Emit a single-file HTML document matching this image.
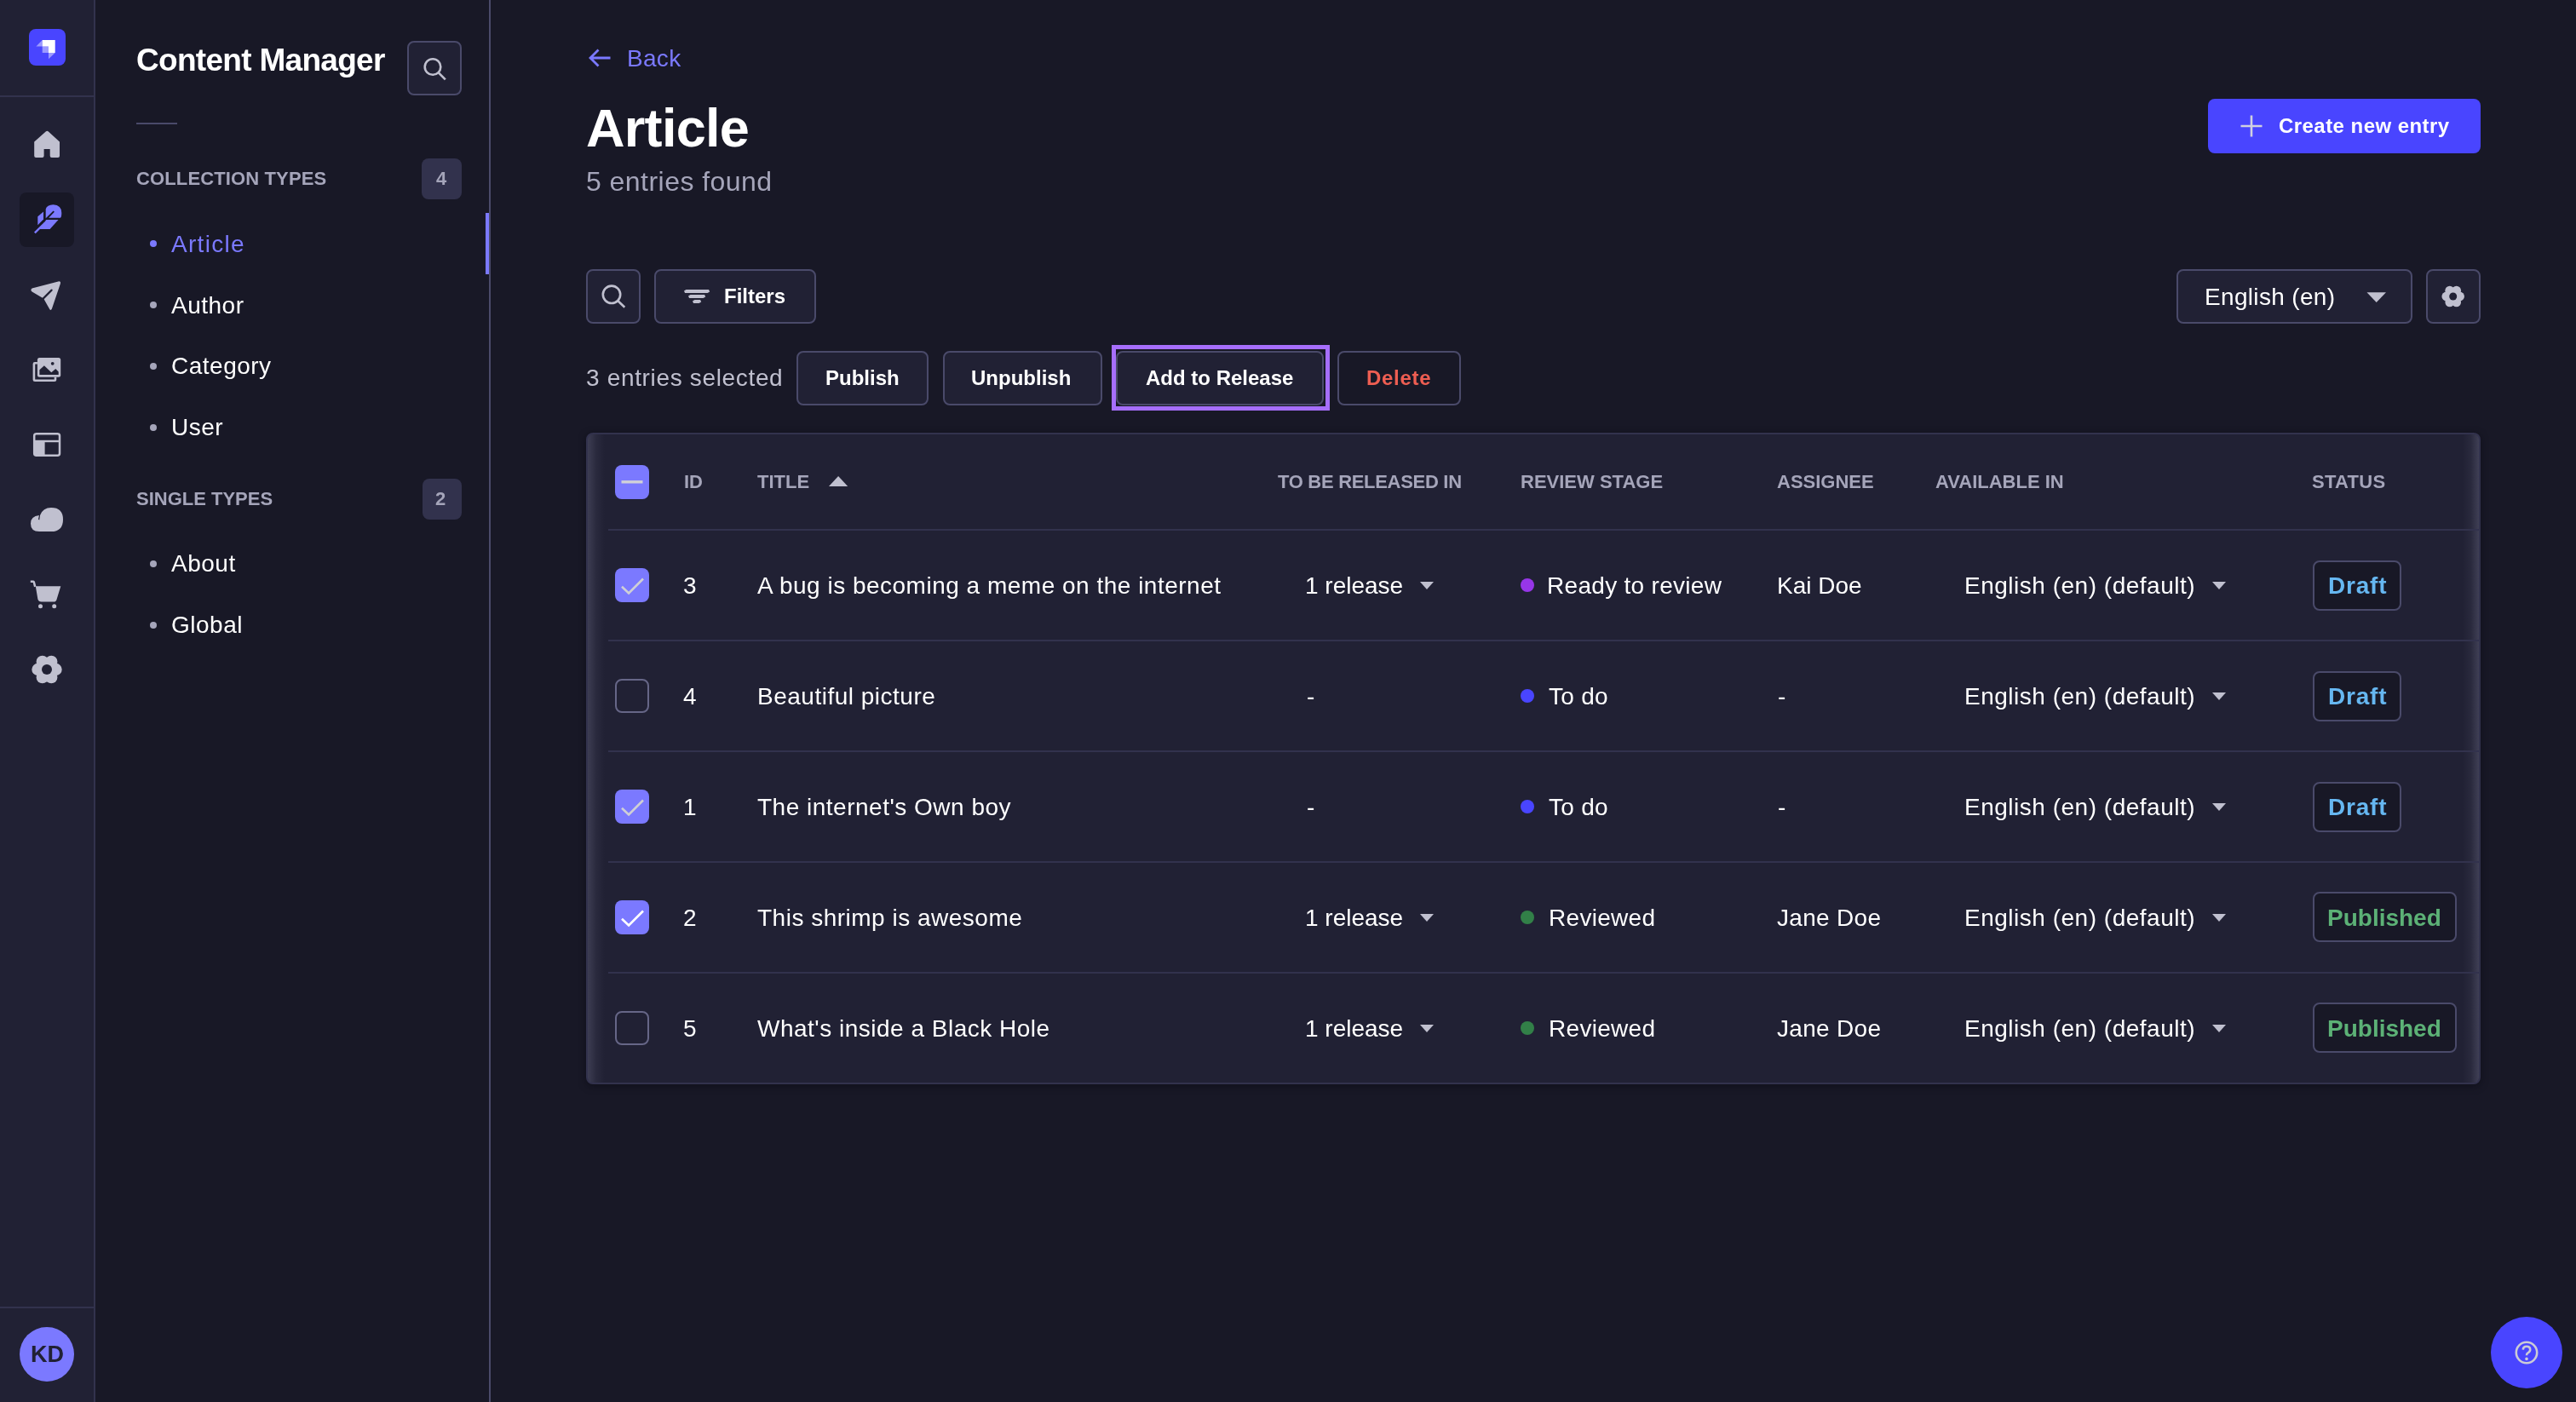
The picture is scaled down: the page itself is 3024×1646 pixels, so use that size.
<!DOCTYPE html>
<html><head><meta charset="utf-8">
<style>
html,body{margin:0;padding:0;}
body{width:3024px;height:1646px;overflow:hidden;background:#181826;position:relative;font-family:"Liberation Sans",sans-serif;}
.a{position:absolute;box-sizing:border-box;}
.t{position:absolute;white-space:nowrap;line-height:1;font-family:"Liberation Sans",sans-serif;will-change:transform;}
.btn{position:absolute;box-sizing:border-box;background:#212134;border:2px solid #4a4a6a;border-radius:8px;}
.hl{position:absolute;left:714px;width:2196px;height:2px;background:#32324d;}
.th{font-size:22px;font-weight:700;color:#a5a5ba;}
.td{font-size:28px;color:#ffffff;}
.cb{position:absolute;left:722px;width:40px;height:40px;border-radius:8px;box-sizing:border-box;}
.cbon{background:#7b79ff;}
.cboff{border:2px solid #666687;}
.dot{position:absolute;width:16px;height:16px;border-radius:50%;left:1785px;}
.badge{position:absolute;left:2715px;height:59px;box-sizing:border-box;background:#181826;border:2px solid #4a4a6a;border-radius:8px;}
svg{position:absolute;left:0;top:0;}
@media (max-width:2000px){html{zoom:0.5;}}
</style></head>
<body>
<!-- left nav -->
<div class="a" style="left:0;top:0;width:110px;height:1646px;background:#212134;"></div>
<div class="a" style="left:110px;top:0;width:2px;height:1646px;background:#32324d;"></div>
<div class="a" style="left:0;top:112px;width:110px;height:2px;background:#32324d;"></div>
<div class="a" style="left:0;top:1534px;width:110px;height:2px;background:#32324d;"></div>
<div class="a" style="left:34.2px;top:34px;width:43.3px;height:43.3px;background:#4945ff;border-radius:8px;"></div>
<div class="a" style="left:23px;top:226px;width:64px;height:64px;background:#181826;border-radius:8px;"></div>
<div class="a" style="left:23px;top:1558px;width:64px;height:64px;background:#7b79ff;border-radius:50%;"></div>
<div class="t" style="left:36px;top:1577px;font-size:27px;font-weight:700;color:#212134;">KD</div>

<!-- sub nav -->
<div class="a" style="left:574px;top:0;width:2px;height:1646px;background:#4a4a6a;"></div>
<div class="t" style="left:159.5px;top:52px;font-size:37px;font-weight:700;color:#ffffff;letter-spacing:-0.7px;">Content Manager</div>
<div class="btn" style="left:478px;top:48px;width:64px;height:64px;"></div>
<div class="a" style="left:160px;top:144px;width:48px;height:2px;background:#4a4a6a;"></div>
<div class="t" style="left:159.6px;top:198.7px;font-size:22px;font-weight:700;color:#a5a5ba;letter-spacing:0.13px;">COLLECTION TYPES</div>
<div class="a" style="left:495px;top:186px;width:47px;height:48px;background:#32324d;border-radius:8px;"></div>
<div class="t" style="left:512.3px;top:198.7px;font-size:22px;font-weight:700;color:#a5a5ba;">4</div>
<div class="a" style="left:570px;top:250px;width:4px;height:72px;background:#7b79ff;"></div>

<div class="a" style="left:176px;top:282px;width:8px;height:8px;border-radius:50%;background:#7b79ff;"></div>
<div class="t" style="left:201px;top:272.5px;font-size:28px;color:#7b79ff;letter-spacing:1.3px;">Article</div>
<div class="a" style="left:176px;top:354px;width:8px;height:8px;border-radius:50%;background:#a5a5ba;"></div>
<div class="t" style="left:201px;top:344.6px;font-size:28px;color:#ffffff;letter-spacing:0.5px;">Author</div>
<div class="a" style="left:176px;top:426px;width:8px;height:8px;border-radius:50%;background:#a5a5ba;"></div>
<div class="t" style="left:201px;top:415.9px;font-size:28px;color:#ffffff;letter-spacing:0.5px;">Category</div>
<div class="a" style="left:176px;top:498px;width:8px;height:8px;border-radius:50%;background:#a5a5ba;"></div>
<div class="t" style="left:201px;top:488.2px;font-size:28px;color:#ffffff;letter-spacing:0.5px;">User</div>

<div class="t" style="left:160.3px;top:574.7px;font-size:22px;font-weight:700;color:#a5a5ba;">SINGLE TYPES</div>
<div class="a" style="left:496px;top:562px;width:46px;height:48px;background:#32324d;border-radius:8px;"></div>
<div class="t" style="left:511px;top:574.7px;font-size:22px;font-weight:700;color:#a5a5ba;">2</div>
<div class="a" style="left:176px;top:658px;width:8px;height:8px;border-radius:50%;background:#a5a5ba;"></div>
<div class="t" style="left:201px;top:648.4px;font-size:28px;color:#ffffff;letter-spacing:0.5px;">About</div>
<div class="a" style="left:176px;top:730px;width:8px;height:8px;border-radius:50%;background:#a5a5ba;"></div>
<div class="t" style="left:201px;top:720.2px;font-size:28px;color:#ffffff;letter-spacing:0.5px;">Global</div>

<!-- header -->
<div class="t" style="left:735.8px;top:54.8px;font-size:28px;color:#7b79ff;letter-spacing:0.3px;">Back</div>
<div class="t" style="left:688px;top:118.5px;font-size:63px;font-weight:700;color:#ffffff;letter-spacing:-0.7px;">Article</div>
<div class="t" style="left:688px;top:196.8px;font-size:32px;color:#a5a5ba;letter-spacing:0.46px;">5 entries found</div>

<div class="a" style="left:2592px;top:116px;width:320px;height:64px;background:#4945ff;border-radius:8px;"></div>
<div class="t" style="left:2675px;top:135.6px;font-size:24px;font-weight:700;color:#ffffff;letter-spacing:0.45px;">Create new entry</div>

<!-- toolbar -->
<div class="btn" style="left:688px;top:316px;width:64px;height:64px;"></div>
<div class="btn" style="left:768px;top:316px;width:190px;height:64px;"></div>
<div class="t" style="left:850px;top:336.1px;font-size:24px;font-weight:700;color:#ffffff;">Filters</div>
<div class="btn" style="left:2555px;top:316px;width:277px;height:64px;"></div>
<div class="t" style="left:2588px;top:334.9px;font-size:28px;color:#ffffff;letter-spacing:0.33px;">English (en)</div>
<div class="btn" style="left:2848px;top:316px;width:64px;height:64px;"></div>

<!-- bulk actions -->
<div class="t" style="left:688px;top:430.2px;font-size:28px;color:#c0c0cf;letter-spacing:0.66px;">3 entries selected</div>
<div class="btn" style="left:935px;top:412px;width:155px;height:64px;"></div>
<div class="t" style="left:969px;top:432.4px;font-size:24px;font-weight:700;color:#ffffff;">Publish</div>
<div class="btn" style="left:1107px;top:412px;width:187px;height:64px;"></div>
<div class="t" style="left:1140px;top:432.4px;font-size:24px;font-weight:700;color:#ffffff;">Unpublish</div>
<div class="a" style="left:1305px;top:405px;width:256px;height:77px;border:5px solid #a66efc;"></div>
<div class="btn" style="left:1310px;top:412px;width:244px;height:64px;"></div>
<div class="t" style="left:1345px;top:432.4px;font-size:24px;font-weight:700;color:#ffffff;">Add to Release</div>
<div class="btn" style="left:1570px;top:412px;width:145px;height:64px;background:#181826;"></div>
<div class="t" style="left:1604px;top:432.4px;font-size:24px;font-weight:700;color:#ee5e52;letter-spacing:0.7px;">Delete</div>

<!-- table -->
<div class="a" style="left:688px;top:508px;width:2224px;height:765px;background:#212134;border:2px solid #32324d;border-radius:8px;box-shadow:0 2px 8px rgba(8,8,16,0.5);"></div>
<div class="a" style="left:690px;top:510px;width:20px;height:761px;background:linear-gradient(to right,rgba(140,140,170,0.26),rgba(140,140,170,0.08) 50%,rgba(140,140,170,0));border-radius:6px 0 0 6px;"></div>
<div class="a" style="left:2891px;top:510px;width:19px;height:761px;background:linear-gradient(to left,rgba(140,140,170,0.28),rgba(140,140,170,0.08) 50%,rgba(140,140,170,0));border-radius:0 6px 6px 0;"></div>
<div class="hl" style="top:621px;"></div>
<div class="hl" style="top:751px;"></div>
<div class="hl" style="top:881px;"></div>
<div class="hl" style="top:1011px;"></div>
<div class="hl" style="top:1141px;"></div>

<div class="cb cbon" style="top:546px;"></div>
<div class="t th" style="left:803px;top:554.8px;">ID</div>
<div class="t th" style="left:889px;top:554.8px;">TITLE</div>
<div class="t th" style="left:1500px;top:554.8px;letter-spacing:-0.3px;">TO BE RELEASED IN</div>
<div class="t th" style="left:1785px;top:554.8px;">REVIEW STAGE</div>
<div class="t th" style="left:2086px;top:554.8px;">ASSIGNEE</div>
<div class="t th" style="left:2272px;top:554.8px;">AVAILABLE IN</div>
<div class="t th" style="left:2714.3px;top:554.8px;letter-spacing:0.28px;">STATUS</div>

<!-- row 1 -->
<div class="cb cbon" style="top:667px;"></div>
<div class="t td" style="left:802px;top:673.7px;">3</div>
<div class="t td" style="left:889px;top:673.7px;letter-spacing:0.5px;">A bug is becoming a meme on the internet</div>
<div class="t td" style="left:1532px;top:673.7px;">1 release</div>
<div class="dot" style="top:679px;background:#9736e8;"></div>
<div class="t td" style="left:1816.4px;top:673.7px;letter-spacing:0.3px;">Ready to review</div>
<div class="t td" style="left:2086px;top:673.7px;letter-spacing:0px;">Kai Doe</div>
<div class="t td" style="left:2306px;top:673.7px;letter-spacing:0.51px;">English (en) (default)</div>
<div class="badge" style="top:658px;width:104px;"></div>
<div class="t" style="left:2733px;top:674.2px;font-size:28px;font-weight:700;color:#66b7f1;letter-spacing:0.8px;">Draft</div>

<!-- row 2 -->
<div class="cb cboff" style="top:797px;"></div>
<div class="t td" style="left:802px;top:803.7px;">4</div>
<div class="t td" style="left:889px;top:803.7px;letter-spacing:0.5px;">Beautiful picture</div>
<div class="t td" style="left:1534px;top:803.7px;">-</div>
<div class="dot" style="top:809px;background:#4945ff;"></div>
<div class="t td" style="left:1818px;top:803.7px;letter-spacing:0.3px;">To do</div>
<div class="t td" style="left:2087px;top:803.7px;">-</div>
<div class="t td" style="left:2306px;top:803.7px;letter-spacing:0.51px;">English (en) (default)</div>
<div class="badge" style="top:788px;width:104px;"></div>
<div class="t" style="left:2733px;top:804.2px;font-size:28px;font-weight:700;color:#66b7f1;letter-spacing:0.8px;">Draft</div>

<!-- row 3 -->
<div class="cb cbon" style="top:927px;"></div>
<div class="t td" style="left:802px;top:933.7px;">1</div>
<div class="t td" style="left:889px;top:933.7px;letter-spacing:0.5px;">The internet's Own boy</div>
<div class="t td" style="left:1534px;top:933.7px;">-</div>
<div class="dot" style="top:939px;background:#4945ff;"></div>
<div class="t td" style="left:1818px;top:933.7px;letter-spacing:0.3px;">To do</div>
<div class="t td" style="left:2087px;top:933.7px;">-</div>
<div class="t td" style="left:2306px;top:933.7px;letter-spacing:0.51px;">English (en) (default)</div>
<div class="badge" style="top:918px;width:104px;"></div>
<div class="t" style="left:2733px;top:934.2px;font-size:28px;font-weight:700;color:#66b7f1;letter-spacing:0.8px;">Draft</div>

<!-- row 4 -->
<div class="cb cbon" style="top:1057px;"></div>
<div class="t td" style="left:802px;top:1063.7px;">2</div>
<div class="t td" style="left:889px;top:1063.7px;letter-spacing:0.5px;">This shrimp is awesome</div>
<div class="t td" style="left:1532px;top:1063.7px;">1 release</div>
<div class="dot" style="top:1069px;background:#328048;"></div>
<div class="t td" style="left:1818px;top:1063.7px;letter-spacing:0.3px;">Reviewed</div>
<div class="t td" style="left:2086px;top:1063.7px;letter-spacing:0.3px;">Jane Doe</div>
<div class="t td" style="left:2306px;top:1063.7px;letter-spacing:0.51px;">English (en) (default)</div>
<div class="badge" style="top:1047px;width:169px;"></div>
<div class="t" style="left:2732px;top:1064.2px;font-size:28px;font-weight:700;color:#5cb176;">Published</div>

<!-- row 5 -->
<div class="cb cboff" style="top:1187px;"></div>
<div class="t td" style="left:802px;top:1193.7px;">5</div>
<div class="t td" style="left:889px;top:1193.7px;letter-spacing:0.5px;">What's inside a Black Hole</div>
<div class="t td" style="left:1532px;top:1193.7px;">1 release</div>
<div class="dot" style="top:1199px;background:#328048;"></div>
<div class="t td" style="left:1818px;top:1193.7px;letter-spacing:0.3px;">Reviewed</div>
<div class="t td" style="left:2086px;top:1193.7px;letter-spacing:0.3px;">Jane Doe</div>
<div class="t td" style="left:2306px;top:1193.7px;letter-spacing:0.51px;">English (en) (default)</div>
<div class="badge" style="top:1177px;width:169px;"></div>
<div class="t" style="left:2732px;top:1194.2px;font-size:28px;font-weight:700;color:#5cb176;">Published</div>

<!-- help -->
<div class="a" style="left:2924px;top:1546px;width:84px;height:84px;background:#4945ff;border-radius:50%;"></div>

<!-- ICONS -->
<svg width="3024" height="1646" viewBox="0 0 3024 1646">
  <!-- logo -->
  <path d="M49.7 47H64.7V62H56.9V54.4H49.7Z" fill="#fff"/>
  <path d="M49.7 54.4H56.9V62H49.7Z" fill="#fff" fill-opacity="0.45"/>
  <path d="M42.4 54.4L49.7 47V54.4Z" fill="#fff" fill-opacity="0.45"/>
  <path d="M57 62H64.7L57 69.3Z" fill="#fff" fill-opacity="0.45"/>
  <!-- home -->
  <path d="M54 154.3Q55.3 153 56.6 154.3L70 166.4V183Q70 185 68 185H60.7Q58.7 185 58.7 183V175H51.6V183Q51.6 185 49.6 185H42.2Q40.2 185 40.2 183V166.4Z" fill="#c0c0cf"/>
  <!-- feather -->
  <g fill="#7b79ff">
    <path d="M53.7 245.6Q55 240.5 62.5 240.3Q72.3 240.8 72.3 250Q72.3 254.5 71 255.7H57.2L63.9 248.7L62.6 247.4L53.7 256.3Z"/>
    <path d="M44.3 254.3L51 248.6V257.5L44.3 264.3Z"/>
    <path d="M54.3 258H68.5L58.6 269.1H46.5Z"/>
    <path d="M40 272.4L52.4 260.4L53.9 261.9L41.7 274.2Z"/>
  </g>
  <!-- paper plane -->
  <path d="M37.6 338.4L68.4 330.4Q71.6 329.8 70.9 332.9L60.9 362.6Q59.6 365.4 58.1 362.7L51.2 350.6L37.6 342.6Q35.2 340.3 37.6 338.4Z" fill="#c0c0cf"/><path d="M49.6 351.6L60.6 340.6" stroke="#212134" stroke-width="2.2" stroke-linecap="round"/>
  <!-- media -->
  <g>
    <path d="M43.9 426.2H40.9Q39.9 426.2 39.9 427.2V445.5Q39.9 446.7 41.1 446.7H63.8Q65 446.7 65 445.5V442.7" fill="none" stroke="#c0c0cf" stroke-width="2.6"/>
    <rect x="43.9" y="419.9" width="27.3" height="22.8" rx="2.5" fill="#c0c0cf"/>
    <path d="M46.4 434.3L51.9 429.2L60.3 437.2L65.3 433.1L68.7 436.5V439.9H46.4Z" fill="#212134"/>
    <circle cx="61.7" cy="426.8" r="1.9" fill="#212134"/>
  </g>
  <!-- layout -->
  <g>
    <rect x="40.2" y="509.3" width="29.8" height="25.4" rx="2.5" fill="none" stroke="#c0c0cf" stroke-width="2.5"/>
    <rect x="40" y="516.8" width="30" height="2.4" fill="#c0c0cf"/>
    <rect x="40" y="518" width="12.6" height="16" fill="#c0c0cf"/>
  </g>
  <!-- cloud -->
  <path d="M46 624H60Q74 624 74 609.9Q74 596 60 596Q50.5 596 47.1 604.8L46.2 610.6L45 609.8L45.9 605.1Q36 606 36 614.8Q36 624 46 624Z" fill="#c0c0cf"/>
  <!-- cart -->
  <g fill="#c0c0cf">
    <path d="M35.8 681.5H39.2Q40.6 681.5 41 683L42.4 688.6L40 689.2L38.7 683.9H35.8Z"/>
    <path d="M41.8 688.2H71.3L66.7 703.2Q66 706.5 63 706.6H48.5Q45.3 706.6 44.4 703.6Z"/>
    <circle cx="47.5" cy="711.7" r="2.5"/>
    <circle cx="63.7" cy="711.7" r="2.5"/>
  </g>
  <!-- gear -->
  <g fill="#c0c0cf" fill-rule="evenodd">
    <circle cx="65.50" cy="786.00" r="7.2"/><circle cx="60.25" cy="795.09" r="7.2"/><circle cx="49.75" cy="795.09" r="7.2"/><circle cx="44.50" cy="786.00" r="7.2"/><circle cx="49.75" cy="776.91" r="7.2"/><circle cx="60.25" cy="776.91" r="7.2"/><circle cx="55" cy="786" r="11"/><circle cx="55" cy="786" r="6" fill="#212134"/>
  </g>
  <!-- subnav search -->
  <g fill="none" stroke="#c0c0cf" stroke-width="2.6">
    <circle cx="508" cy="78.5" r="9.3"/>
    <path d="M514.8 85.3L522.8 93.3"/>
  </g>
  <!-- back arrow -->
  <path d="M716.5 68H693.5M702.5 58.5L693 68L702.5 77.5" fill="none" stroke="#7b79ff" stroke-width="2.8"/>
  <!-- plus -->
  <path d="M2643 135.5V160.5M2630.5 148H2655.5" fill="none" stroke="#d0d0e0" stroke-width="2.6"/>
  <!-- toolbar search -->
  <g fill="none" stroke="#c0c0cf" stroke-width="2.6">
    <circle cx="718" cy="345.8" r="10.2"/>
    <path d="M725.4 353.3L733.3 360.8"/>
  </g>
  <!-- filter icon -->
  <g fill="#c0c0cf">
    <path d="M805.5 340H832L833.2 342.4L830.6 344H804.1L803 341.6Z"/>
    <path d="M810.5 346H827.1L828.2 348.4L825.6 350H809.1L808 347.6Z"/>
    <path d="M815.5 352H822.1L823.2 354.4L820.6 356H814.1L813 353.6Z"/>
  </g>
  <!-- dropdown caret -->
  <path d="M2778.5 343.3H2801L2789.7 355Z" fill="#c0c0cf"/>
  <!-- settings gear -->
  <g fill="#c0c0cf" fill-rule="evenodd" transform="translate(2838.45 -241.5) scale(0.75)">
    <circle cx="65.50" cy="786.00" r="7.2"/><circle cx="60.25" cy="795.09" r="7.2"/><circle cx="49.75" cy="795.09" r="7.2"/><circle cx="44.50" cy="786.00" r="7.2"/><circle cx="49.75" cy="776.91" r="7.2"/><circle cx="60.25" cy="776.91" r="7.2"/><circle cx="55" cy="786" r="11"/><circle cx="55" cy="786" r="6" fill="#212134"/>
  </g>
  <!-- header checkbox minus -->
  <path d="M729.5 565.8H754.5" stroke="#d0d0d8" stroke-width="3.4"/>
  <!-- sort caret -->
  <path d="M973 571H995.2L984.1 559Z" fill="#c0c0cf"/>
  <!-- checks -->
  <path d="M730 688.8L738.1 696.5L755 679.5" fill="none" stroke="#cfcfd6" stroke-width="2.6"/>
  <path d="M730 948.8L738.1 956.5L755 939.5" fill="none" stroke="#cfcfd6" stroke-width="2.6"/>
  <path d="M730 1078.8L738.1 1086.5L755 1069.5" fill="none" stroke="#ffffff" stroke-width="2.6"/>
  <!-- row carets -->
  <g fill="#c0c0cf">
    <path d="M1667 683H1683L1675 692Z"/>
    <path d="M1667 1073H1683L1675 1082Z"/>
    <path d="M1667 1203H1683L1675 1212Z"/>
    <path d="M2597 683H2613L2605 692Z"/>
    <path d="M2597 813H2613L2605 822Z"/>
    <path d="M2597 943H2613L2605 952Z"/>
    <path d="M2597 1073H2613L2605 1082Z"/>
    <path d="M2597 1203H2613L2605 1212Z"/>
  </g>
  <!-- help icon -->
  <g fill="none" stroke="#cbcbd6" stroke-width="2.6">
    <circle cx="2966" cy="1588" r="12.2"/>
    <path d="M2961.8 1584.6Q2962 1580.8 2966 1580.8Q2970.2 1580.8 2970.2 1584.6Q2970.2 1587 2967.5 1588.3Q2966 1589 2966 1591.2"/>
  </g>
  <circle cx="2966" cy="1595.4" r="1.8" fill="#cbcbd6"/>
</svg>
</body></html>
